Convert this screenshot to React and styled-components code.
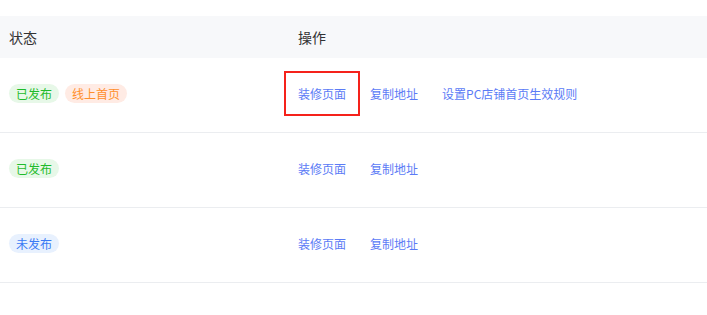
import styled, { createGlobalStyle } from "styled-components";

const GlobalStyle = createGlobalStyle`
  body {
    margin: 0;
    background: #fff;
    font-family: "Noto Sans CJK SC", "Noto Sans", "Liberation Sans", sans-serif;
  }
`;

const Page = styled.div`
  padding-top: 16px;
`;

const Table = styled.div`
  width: 100%;
`;

const HeadRow = styled.div`
  display: grid;
  grid-template-columns: 289px 1fr;
  height: 42px;
  align-items: center;
  background: #f7f8fa;
  font-size: 14px;
  color: #323233;
`;

const Row = styled.div`
  display: grid;
  grid-template-columns: 289px 1fr;
  box-sizing: border-box;
  height: 75px;
  padding-bottom: 3px;
  align-items: center;
  border-bottom: 1px solid #ebedf0;
`;

const Cell = styled.div`
  padding-left: 9px;
  display: flex;
  align-items: center;
`;

const tagColors = {
  green: { fg: "#1fbb2c", bg: "#e7f8e8" },
  orange: { fg: "#ff8f2b", bg: "#ffebe4" },
  blue: { fg: "#3a7af5", bg: "#e8f1fe" },
};

const Tag = styled.span`
  display: inline-flex;
  align-items: center;
  height: 19px;
  padding: 0 7px;
  margin-right: 6px;
  border-radius: 10px;
  font-size: 12px;
  color: ${(p) => tagColors[p.$tone].fg};
  background: ${(p) => tagColors[p.$tone].bg};
`;

const Actions = styled.div`
  display: flex;
  gap: 24px;
`;

const ActionLink = styled.a`
  font-size: 12px;
  line-height: 17px;
  color: #5b7bf6;
  cursor: pointer;
  outline: ${(p) => (p.$marked ? "2px solid #f5221b" : "none")};
  outline-offset: 12px;
`;

const rows = [
  {
    tags: [
      { text: "已发布", tone: "green" },
      { text: "线上首页", tone: "orange" },
    ],
    actions: ["装修页面", "复制地址", "设置PC店铺首页生效规则"],
    marked: true,
  },
  {
    tags: [{ text: "已发布", tone: "green" }],
    actions: ["装修页面", "复制地址"],
  },
  {
    tags: [{ text: "未发布", tone: "blue" }],
    actions: ["装修页面", "复制地址"],
  },
];

export default function App() {
  return (
    <Page>
      <GlobalStyle />
      <Table>
        <HeadRow>
          <Cell>状态</Cell>
          <Cell>操作</Cell>
        </HeadRow>
        {rows.map((row, i) => (
          <Row key={i}>
            <Cell>
              {row.tags.map((t) => (
                <Tag key={t.text} $tone={t.tone}>
                  {t.text}
                </Tag>
              ))}
            </Cell>
            <Cell>
              <Actions>
                {row.actions.map((a, j) => (
                  <ActionLink key={a} $marked={row.marked && j === 0}>
                    {a}
                  </ActionLink>
                ))}
              </Actions>
            </Cell>
          </Row>
        ))}
      </Table>
    </Page>
  );
}
